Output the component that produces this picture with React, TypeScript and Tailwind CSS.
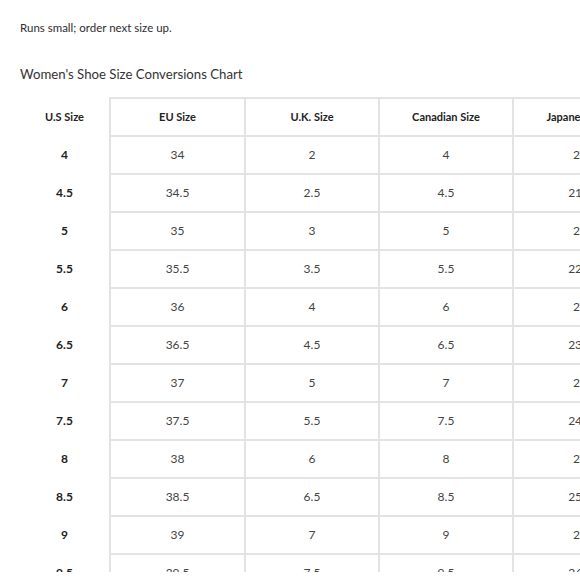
const headers = ["U.S Size", "EU Size", "U.K. Size", "Canadian Size", "Japanese Size"];

const rows = [
  ["4", "34", "2", "4", "21"],
  ["4.5", "34.5", "2.5", "4.5", "21.5"],
  ["5", "35", "3", "5", "22"],
  ["5.5", "35.5", "3.5", "5.5", "22.5"],
  ["6", "36", "4", "6", "23"],
  ["6.5", "36.5", "4.5", "6.5", "23.5"],
  ["7", "37", "5", "7", "24"],
  ["7.5", "37.5", "5.5", "7.5", "24.5"],
  ["8", "38", "6", "8", "25"],
  ["8.5", "38.5", "6.5", "8.5", "25.5"],
  ["9", "39", "7", "9", "26"],
  ["9.5", "39.5", "7.5", "9.5", "26.5"],
];

export default function App() {
  return (
    <div className="w-[580px] h-[572px] overflow-hidden bg-white font-['Lato','Open_Sans',sans-serif]">
      <p className="pt-[20px] pl-[20px] text-[11.5px] leading-[16px] text-[#2e2e2e]">
        Runs small; order next size up.
      </p>
      <h2 className="mt-[29px] pl-[20px] text-[13.2px] leading-[18px] text-[#333]">
        Women's Shoe Size Conversions Chart
      </h2>

      {/* Size table */}
      <table className="mt-[14px] ml-[20px] w-[627px] table-fixed border-collapse">
        <colgroup>
          <col className="w-[90px]" />
          <col className="w-[135px]" />
          <col className="w-[134px]" />
          <col className="w-[134px]" />
          <col className="w-[134px]" />
        </colgroup>
        <thead>
          <tr className="h-[38px]">
            {headers.map((h, i) => (
              <th
                key={h}
                className={
                  i === 0
                    ? "p-0 text-[11px] font-bold text-[#222] text-center whitespace-nowrap"
                    : "p-0 text-[11px] font-bold text-[#222] text-center whitespace-nowrap border-2 border-[#e3e3e3]"
                }
              >
                {h}
              </th>
            ))}
          </tr>
        </thead>
        <tbody>
          {rows.map((r) => (
            <tr key={r[0]} className="h-[38px]">
              {r.map((c, i) => (
                <td
                  key={i}
                  className={
                    i === 0
                      ? "p-0 text-[12px] font-bold text-[#222] text-center"
                      : "p-0 text-[12px] text-[#444] text-center border-2 border-[#e3e3e3]"
                  }
                >
                  {c}
                </td>
              ))}
            </tr>
          ))}
        </tbody>
      </table>
    </div>
  );
}
